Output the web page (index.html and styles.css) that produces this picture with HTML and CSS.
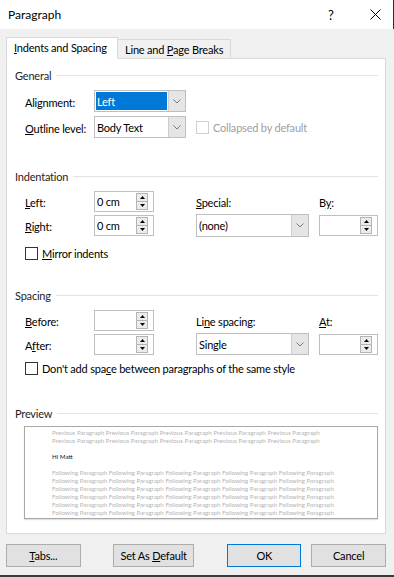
FILE: index.html
```html
<!DOCTYPE html>
<html lang="en">
<head>
    <meta charset="UTF-8">
    <meta name="viewport" content="width=device-width, initial-scale=1.0">
    <title>Paragraph</title>
    <link rel="stylesheet" href="styles.css">
</head>
<body>

<div class="window">
    <div class="titlebar">
        <span class="title">Paragraph</span>
        <span class="help">?</span>
        <span class="close">
            <svg width="11" height="11" viewBox="0 0 11 11"><path d="M0.5 0.5 L10.5 10.5 M10.5 0.5 L0.5 10.5" stroke="#000" stroke-width="1" fill="none"/></svg>
        </span>
    </div>

    <div class="dialog">
        <div class="tabs">
            <div class="tab active"><span><u>I</u>ndents and Spacing</span></div>
            <div class="tab"><span>Line and <u>P</u>age Breaks</span></div>
        </div>

        <div class="panel">
            <!-- General -->
            <div class="group-title">General</div>
            <div class="general-grid">
                <span class="lbl">Alignment:</span>
                <div class="select focused">
                    <span class="sel-val">Left</span>
                    <span class="sel-drop"><svg width="8" height="5" viewBox="0 0 8 5"><path d="M0.5 0.5 L4 4 L7.5 0.5" stroke="#7a7a7a" fill="none"/></svg></span>
                </div>
                <span></span>
                <span></span>

                <span class="lbl"><u>O</u>utline level:</span>
                <div class="select">
                    <span class="sel-val">Body Text</span>
                    <span class="sel-drop"><svg width="8" height="5" viewBox="0 0 8 5"><path d="M0.5 0.5 L4 4 L7.5 0.5" stroke="#7a7a7a" fill="none"/></svg></span>
                </div>
                <span></span>
                <div class="check-row">
                    <span class="check disabled"></span>
                    <span class="muted">Collapsed by default</span>
                </div>
            </div>

            <!-- Indentation -->
            <div class="group-title gap-indent">Indentation</div>
            <div class="field-grid indent-grid">
                <span class="lbl c1"><u>L</u>eft:</span>
                <div class="spin c2">
                    <span class="spin-val">0 cm</span>
                    <span class="spin-btns">
                        <span class="spin-btn"><svg width="5" height="3" viewBox="0 0 5 3"><polygon points="2.5,0 5,3 0,3" fill="#000"/></svg></span>
                        <span class="spin-btn"><svg width="5" height="3" viewBox="0 0 5 3"><polygon points="0,0 5,0 2.5,3" fill="#000"/></svg></span>
                    </span>
                </div>
                <span class="lbl c3"><u>S</u>pecial:</span>
                <span class="lbl c4">B<u>y</u>:</span>

                <span class="lbl c1"><u>R</u>ight:</span>
                <div class="spin c2">
                    <span class="spin-val">0 cm</span>
                    <span class="spin-btns">
                        <span class="spin-btn"><svg width="5" height="3" viewBox="0 0 5 3"><polygon points="2.5,0 5,3 0,3" fill="#000"/></svg></span>
                        <span class="spin-btn"><svg width="5" height="3" viewBox="0 0 5 3"><polygon points="0,0 5,0 2.5,3" fill="#000"/></svg></span>
                    </span>
                </div>
                <div class="select c3">
                    <span class="sel-val">(none)</span>
                    <span class="sel-drop"><svg width="8" height="5" viewBox="0 0 8 5"><path d="M0.5 0.5 L4 4 L7.5 0.5" stroke="#7a7a7a" fill="none"/></svg></span>
                </div>
                <div class="spin c4">
                    <span class="spin-val"></span>
                    <span class="spin-btns">
                        <span class="spin-btn"><svg width="5" height="3" viewBox="0 0 5 3"><polygon points="2.5,0 5,3 0,3" fill="#000"/></svg></span>
                        <span class="spin-btn"><svg width="5" height="3" viewBox="0 0 5 3"><polygon points="0,0 5,0 2.5,3" fill="#000"/></svg></span>
                    </span>
                </div>
            </div>
            <div class="check-row mirror">
                <span class="check"></span>
                <span><u>M</u>irror indents</span>
            </div>

            <!-- Spacing -->
            <div class="group-title gap-spacing">Spacing</div>
            <div class="field-grid spacing-grid">
                <span class="lbl c1"><u>B</u>efore:</span>
                <div class="spin c2">
                    <span class="spin-val"></span>
                    <span class="spin-btns">
                        <span class="spin-btn"><svg width="5" height="3" viewBox="0 0 5 3"><polygon points="2.5,0 5,3 0,3" fill="#000"/></svg></span>
                        <span class="spin-btn"><svg width="5" height="3" viewBox="0 0 5 3"><polygon points="0,0 5,0 2.5,3" fill="#000"/></svg></span>
                    </span>
                </div>
                <span class="lbl c3">Li<u>n</u>e spacing:</span>
                <span class="lbl c4"><u>A</u>t:</span>

                <span class="lbl c1">A<u>f</u>ter:</span>
                <div class="spin c2">
                    <span class="spin-val"></span>
                    <span class="spin-btns">
                        <span class="spin-btn"><svg width="5" height="3" viewBox="0 0 5 3"><polygon points="2.5,0 5,3 0,3" fill="#000"/></svg></span>
                        <span class="spin-btn"><svg width="5" height="3" viewBox="0 0 5 3"><polygon points="0,0 5,0 2.5,3" fill="#000"/></svg></span>
                    </span>
                </div>
                <div class="select c3">
                    <span class="sel-val">Single</span>
                    <span class="sel-drop"><svg width="8" height="5" viewBox="0 0 8 5"><path d="M0.5 0.5 L4 4 L7.5 0.5" stroke="#7a7a7a" fill="none"/></svg></span>
                </div>
                <div class="spin c4">
                    <span class="spin-val"></span>
                    <span class="spin-btns">
                        <span class="spin-btn"><svg width="5" height="3" viewBox="0 0 5 3"><polygon points="2.5,0 5,3 0,3" fill="#000"/></svg></span>
                        <span class="spin-btn"><svg width="5" height="3" viewBox="0 0 5 3"><polygon points="0,0 5,0 2.5,3" fill="#000"/></svg></span>
                    </span>
                </div>
            </div>
            <div class="check-row same-style">
                <span class="check"></span>
                <span>Don't add spa<u>c</u>e between paragraphs of the same style</span>
            </div>

            <!-- Preview -->
            <div class="group-title gap-preview">Preview</div>
            <div class="preview">
                <div class="pv-line pv-gray">Previous Paragraph Previous Paragraph Previous Paragraph Previous Paragraph Previous Paragraph</div>
                <div class="pv-line pv-gray">Previous Paragraph Previous Paragraph Previous Paragraph Previous Paragraph Previous Paragraph</div>
                <div class="pv-line"></div>
                <div class="pv-line">Hi Matt</div>
                <div class="pv-line"></div>
                <div class="pv-line pv-gray">Following Paragraph Following Paragraph Following Paragraph Following Paragraph Following Paragraph</div>
                <div class="pv-line pv-gray">Following Paragraph Following Paragraph Following Paragraph Following Paragraph Following Paragraph</div>
                <div class="pv-line pv-gray">Following Paragraph Following Paragraph Following Paragraph Following Paragraph Following Paragraph</div>
                <div class="pv-line pv-gray">Following Paragraph Following Paragraph Following Paragraph Following Paragraph Following Paragraph</div>
                <div class="pv-line pv-gray">Following Paragraph Following Paragraph Following Paragraph Following Paragraph Following Paragraph</div>
                <div class="pv-line pv-gray">Following Paragraph Following Paragraph Following Paragraph Following Paragraph Following Paragraph</div>
            </div>
        </div>

        <div class="buttons">
            <div class="btn btn-tabs"><span><u>T</u>abs...</span></div>
            <div class="btn btn-default"><span>Set As <u>D</u>efault</span></div>
            <div class="btn btn-ok"><span>OK</span></div>
            <div class="btn btn-cancel"><span>Cancel</span></div>
        </div>
    </div>
    <div class="bottom-edge"></div>
</div>

</body>
</html>
```

FILE: styles.css
```css
/* 全局样式 */
* {
    margin: 0;
    padding: 0;
    box-sizing: border-box;
}

html, body {
    width: 394px;
    height: 577px;
    overflow: hidden;
    font-family: Lato, "Liberation Sans", sans-serif;
    font-size: 11px;
    letter-spacing: -0.2px;
    color: #000;
    background: #f0f0f0;
}

u {
    text-decoration: underline;
    text-underline-offset: 1px;
}

/* 标题栏 */
.titlebar {
    height: 29px;
    background: #fff;
    display: flex;
    align-items: center;
    padding-left: 8px;
    box-shadow: inset -1px 0 0 #2b2b2b;
}

.title {
    font-size: 12px;
    letter-spacing: 0;
    flex: 1;
}

.help {
    font-size: 13px;
    width: 42px;
}

.close {
    width: 24px;
    display: flex;
    align-items: center;
}

/* 对话框主体 */
.dialog {
    padding: 8px 8px 0 6px;
}

.tabs {
    display: flex;
    margin-bottom: -1px;
}

.tab {
    height: 20px;
    margin-top: 2px;
    border: 1px solid #d9d9d9;
    background: #f0f0f0;
    display: flex;
    align-items: center;
    padding-left: 7px;
}

.tab:first-child {
    width: 112px;
}

.tab:last-child {
    width: 113px;
    border-left: none;
}

.tab.active {
    position: relative;
    height: 22px;
    margin-top: 0;
    background: #fff;
    border-bottom-color: #fff;
    padding-bottom: 1px;
}

.panel {
    height: 476px;
    background: #fff;
    border: 1px solid #d9d9d9;
    padding: 8px 7px 0 8px;
}

/* 分组标题 */
.group-title {
    display: flex;
    align-items: center;
    height: 16px;
    color: #1e1e1e;
}

.group-title::after {
    content: '';
    flex: 1;
    height: 1px;
    background: #e3e3e3;
    margin-left: 5px;
}

.gap-indent { margin-top: 30px; }
.gap-spacing { margin-top: 25px; }
.gap-preview { margin-top: 29px; }

/* 表单行 */
.general-grid {
    display: grid;
    grid-template-columns: 69px 92px 10px auto;
    grid-auto-rows: 22px;
    row-gap: 4px;
    margin: 7px 0 0 10px;
}

.field-grid {
    display: grid;
    grid-template-columns: 69px 60px 42px 113px 10px 59px;
    row-gap: 2px;
    margin-left: 10px;
}

.indent-grid {
    margin-top: 6px;
    grid-template-rows: 22px 23px;
}

.spacing-grid {
    margin-top: 7px;
    grid-template-rows: 21px 22px;
}

.c1 { grid-column: 1; }
.c2 { grid-column: 2; }
.c3 { grid-column: 4; }
.c4 { grid-column: 6; }

.lbl {
    align-self: center;
    padding-top: 2px;
}

/* 下拉框 */
.select {
    display: flex;
    border: 1px solid #bfbfbf;
    background: #fff;
}

.sel-val {
    flex: 1;
    display: flex;
    align-items: center;
    padding-left: 2px;
}

.select.focused .sel-val {
    background: #0078d7;
    color: #fff;
    margin: 1px;
    padding-left: 1px;
}

.sel-drop {
    width: 17px;
    background: #e5e5e5;
    border-left: 1px solid #cdcdcd;
    display: flex;
    align-items: center;
    justify-content: center;
}

/* 数值框 */
.spin {
    display: flex;
    height: 21px;
    align-self: center;
    border: 1px solid #bfbfbf;
    background: #fff;
}

.spin-val {
    flex: 1;
    display: flex;
    align-items: center;
    padding-left: 2px;
}

.spin-btns {
    display: flex;
    flex-direction: column;
    justify-content: center;
    margin-right: 5px;
}

.spin-btn {
    width: 12px;
    height: 9px;
    border: 1px solid #b4b4b4;
    background: #ececec;
    display: flex;
    align-items: center;
    justify-content: center;
}

.spin-btn + .spin-btn {
    margin-top: -1px;
}

/* 复选框 */
.check-row {
    display: flex;
    align-items: center;
    gap: 4px;
}

.check {
    width: 13px;
    height: 13px;
    border: 1px solid #333;
    background: #fff;
}

.check.disabled {
    border-color: #d0d0d0;
}

.muted {
    color: #a0a0a0;
}

.mirror {
    height: 17px;
    margin: 8px 0 0 10px;
}

.same-style {
    height: 16px;
    margin: 5px 0 0 10px;
}

/* 预览 */
.preview {
    height: 93px;
    margin: 5px 0 0 9px;
    border: 1px solid #a8a8a8;
    box-shadow: 0 1px 1px rgba(0, 0, 0, 0.12);
    padding: 2px 0 0 27px;
    font-size: 6.2px;
    letter-spacing: 0;
}

.pv-line {
    height: 8px;
    line-height: 8px;
    white-space: nowrap;
    color: #111;
}

.pv-gray {
    color: #b4b4b4;
}

/* 按钮 */
.buttons {
    display: flex;
    margin-top: 10px;
}

.btn {
    height: 23px;
    border: 1px solid #adadad;
    background: #e1e1e1;
    display: flex;
    align-items: center;
    justify-content: center;
}

.btn-tabs { width: 75px; }
.btn-default { width: 82px; margin-left: 32px; }
.btn-ok { width: 74px; margin-left: 33px; border-color: #0078d7; }
.btn-cancel { width: 75px; margin-left: 10px; }

.bottom-edge {
    height: 2px;
    margin-top: 8px;
    background: #3a3a3a;
}
```
